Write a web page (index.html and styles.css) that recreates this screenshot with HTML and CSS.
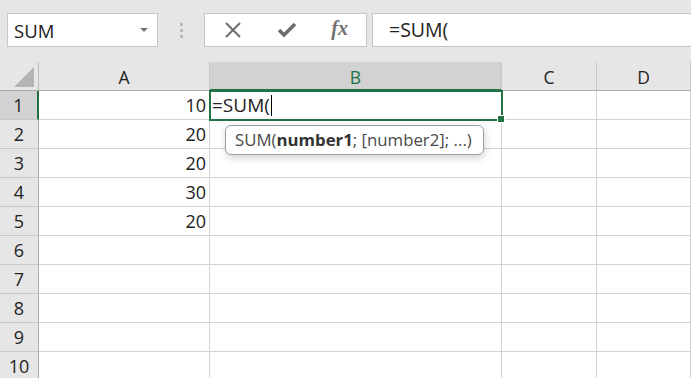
FILE: index.html
```html
<!DOCTYPE html>
<html lang="en">
<head>
  <meta charset="UTF-8" />
  <title>Excel - SUM</title>
  <link rel="stylesheet" href="styles.css">
</head>
<body>
  <div class="toolbar">
    <div class="namebox">
      <span>SUM</span>
      <svg class="caret" width="8" height="5" viewBox="0 0 8 5"><path d="M0 0h8L4 4z" fill="#777"/></svg>
    </div>
    <div class="grip"><i></i><i></i><i></i></div>
    <div class="fbuttons">
      <svg width="20" height="20" viewBox="0 0 20 20"><path d="M3 3L17 17M17 3L3 17" stroke="#6d6d6d" stroke-width="2" fill="none"/></svg>
      <svg width="22" height="20" viewBox="0 0 22 20"><path d="M3 10l5 5L19 4" stroke="#6d6d6d" stroke-width="3.6" fill="none"/></svg>
      <span class="fx">fx</span>
    </div>
    <div class="formula">=SUM(</div>
  </div>

  <div class="sheet">
    <div class="corner"><svg width="20" height="20" viewBox="0 0 20 20"><path d="M20 0V20H0z" fill="#b4b4b4"/></svg></div>
    <div class="colhead">A</div>
    <div class="colhead sel">B</div>
    <div class="colhead">C</div>
    <div class="colhead">D</div>

    <div class="rowhead sel">1</div>
    <div class="cell num">10</div>
    <div class="cell active">=SUM(<span class="caretline"></span><span class="handle"></span>
      <div class="tip">SUM(<b>number1</b>; [number2]; ...)</div>
    </div>
    <div class="cell"></div>
    <div class="cell"></div>

    <div class="rowhead">2</div>
    <div class="cell num">20</div>
    <div class="cell"></div>
    <div class="cell"></div>
    <div class="cell"></div>

    <div class="rowhead">3</div>
    <div class="cell num">20</div>
    <div class="cell"></div>
    <div class="cell"></div>
    <div class="cell"></div>

    <div class="rowhead">4</div>
    <div class="cell num">30</div>
    <div class="cell"></div>
    <div class="cell"></div>
    <div class="cell"></div>

    <div class="rowhead">5</div>
    <div class="cell num">20</div>
    <div class="cell"></div>
    <div class="cell"></div>
    <div class="cell"></div>

    <div class="rowhead">6</div>
    <div class="cell"></div><div class="cell"></div><div class="cell"></div><div class="cell"></div>
    <div class="rowhead">7</div>
    <div class="cell"></div><div class="cell"></div><div class="cell"></div><div class="cell"></div>
    <div class="rowhead">8</div>
    <div class="cell"></div><div class="cell"></div><div class="cell"></div><div class="cell"></div>
    <div class="rowhead">9</div>
    <div class="cell"></div><div class="cell"></div><div class="cell"></div><div class="cell"></div>
    <div class="rowhead">10</div>
    <div class="cell"></div><div class="cell"></div><div class="cell"></div><div class="cell"></div>
  </div>
</body>
</html>
```

FILE: styles.css
```css
body {
  margin: 0;
  width: 691px;
  height: 378px;
  overflow: hidden;
  background: #fff;
  font-family: "Open Sans", "Noto Sans", sans-serif;
  color: #222;
}

.toolbar {
  height: 62px;
  background: #e6e6e6;
  display: flex;
  align-items: flex-start;
  padding-top: 13px;
  box-sizing: border-box;
}

.namebox {
  margin-left: 7px;
  width: 151px;
  height: 34px;
  box-sizing: border-box;
  background: #fff;
  border: 1px solid #c6c6c6;
  display: flex;
  align-items: center;
  justify-content: space-between;
  padding: 0 9px 0 6px;
  font-size: 18.5px;
  color: #222;
}

.caret { margin-top: 1px; }

.grip {
  width: 46px;
  height: 34px;
  display: flex;
  flex-direction: column;
  align-items: center;
  justify-content: center;
  gap: 3px;
}
.grip i {
  width: 3px;
  height: 3px;
  background: #b9b9b9;
  display: block;
}

.fbuttons {
  width: 163px;
  height: 34px;
  box-sizing: border-box;
  background: #fff;
  border: 1px solid #c6c6c6;
  display: flex;
  align-items: center;
  justify-content: space-between;
  padding: 0 18px 0 18px;
}
.fx {
  font-family: "Liberation Serif", "DejaVu Serif", serif;
  font-style: italic;
  font-weight: bold;
  font-size: 20px;
  color: #707070;
  margin-top: -3px;
}

.formula {
  margin-left: 5px;
  flex: 1;
  height: 34px;
  box-sizing: border-box;
  background: #fff;
  border: 1px solid #c6c6c6;
  border-right: none;
  padding-left: 16px;
  line-height: 31px;
  font-size: 19.5px;
  color: #222;
}

.sheet {
  display: grid;
  grid-template-columns: 39px 171px 292px 95px 94px;
  grid-auto-rows: 29px;
  background: #fff;
}
.sheet > div {
  box-sizing: border-box;
  border-right: 1px solid #d4d4d4;
  border-bottom: 1px solid #d4d4d4;
  font-size: 17.5px;
}

.corner {
  background: #e6e6e6;
  border-right: 1px solid #bdbdbd !important;
  border-bottom: 1px solid #ababab !important;
  display: flex;
  align-items: flex-end;
  justify-content: flex-end;
  padding: 0 4px 3px 0;
}

.colhead {
  background: #e6e6e6;
  border-bottom: 1px solid #ababab !important;
  border-right: 1px solid #c8c8c8 !important;
  text-align: center;
  line-height: 31px;
  color: #222;
}
.colhead.sel {
  background: #d2d2d2;
  color: #217346;
  border-bottom: 2px solid #217346 !important;
}

.rowhead {
  background: #e6e6e6;
  border-right: 1px solid #ababab !important;
  border-bottom: 1px solid #c8c8c8 !important;
  text-align: center;
  line-height: 29px;
  font-size: 18px !important;
  color: #222;
}
.rowhead.sel {
  background: #d2d2d2;
  border-right: 2px solid #217346 !important;
}

.cell {
  line-height: 28px;
  padding: 0 3px;
  white-space: nowrap;
}
.num { text-align: right; font-size: 18px !important; }

.active {
  position: relative;
  outline: 2px solid #217346;
  outline-offset: -1px;
  padding-left: 2px;
  font-size: 19px !important;
  z-index: 2;
}
.caretline {
  display: inline-block;
  width: 1px;
  height: 21px;
  background: #000;
  vertical-align: -4px;
  margin-left: 1px;
}
.handle {
  position: absolute;
  right: -4px;
  bottom: -4px;
  width: 6px;
  height: 6px;
  background: #217346;
  border: 1px solid #fff;
}

.tip {
  position: absolute;
  left: 15px;
  top: 34px;
  height: 30px;
  box-sizing: border-box;
  padding: 0 11px 0 9px;
  background: #fff;
  border: 1px solid #9e9e9e;
  border-radius: 6px;
  box-shadow: 1px 3px 8px rgba(0,0,0,0.18);
  font-size: 16.8px;
  line-height: 27px;
  color: #4a4a4a;
}
.tip b { color: #333; }
```
